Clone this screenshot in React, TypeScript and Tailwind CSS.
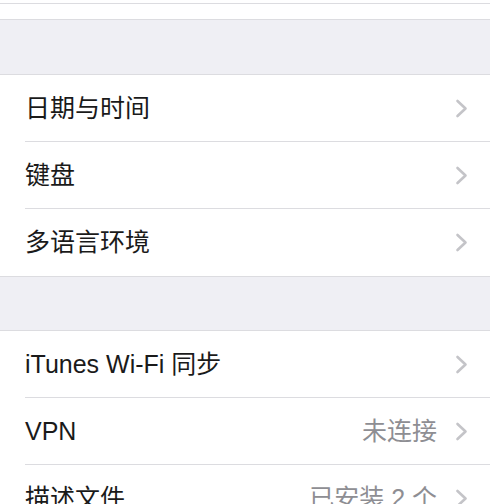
import { ReactNode } from 'react';

const FONT = '"Liberation Sans", "Noto Sans CJK SC", sans-serif';

function Chevron() {
  return (
    <svg width="13" height="19" viewBox="0 0 13 19" className="shrink-0">
      <path d="M2.5 2 L10.5 9.5 L2.5 17" fill="none" stroke="#c4c4c8" strokeWidth="2.6" strokeLinecap="round" strokeLinejoin="round" />
    </svg>
  );
}

function Row({ label, value, last }: { label: ReactNode; value?: string; last?: boolean }) {
  return (
    <div className="h-[67px] bg-white pl-[25px]">
      <div
        className={
          'flex h-full items-center pr-[22px] ' + (last ? '' : 'border-b border-[#dcdce0]')
        }
      >
        <span className="flex-1 text-[25px] leading-none text-[#1a1a1a]">{label}</span>
        {value && <span className="mr-[18px] text-[25px] leading-none text-[#8e8e93]">{value}</span>}
        <Chevron />
      </div>
    </div>
  );
}

export default function App() {
  return (
    <div className="h-[504px] w-[490px] overflow-hidden bg-[#efeff4]" style={{ fontFamily: FONT }}>
      <div className="h-[3px] bg-white" />
      <div className="h-[16px] border-t border-[#dcdce0] bg-white" />
      <div className="h-[56px] border-y border-[#dcdce0] bg-[#efeff4]" />
      <Row label="日期与时间" />
      <Row label="键盘" />
      <Row label="多语言环境" last />
      <div className="h-[55px] border-y border-[#dcdce0] bg-[#efeff4]" />
      <Row label="iTunes Wi-Fi 同步" />
      <Row label="VPN" value="未连接" />
      <Row label="描述文件" value="已安装 2 个" last />
    </div>
  );
}
